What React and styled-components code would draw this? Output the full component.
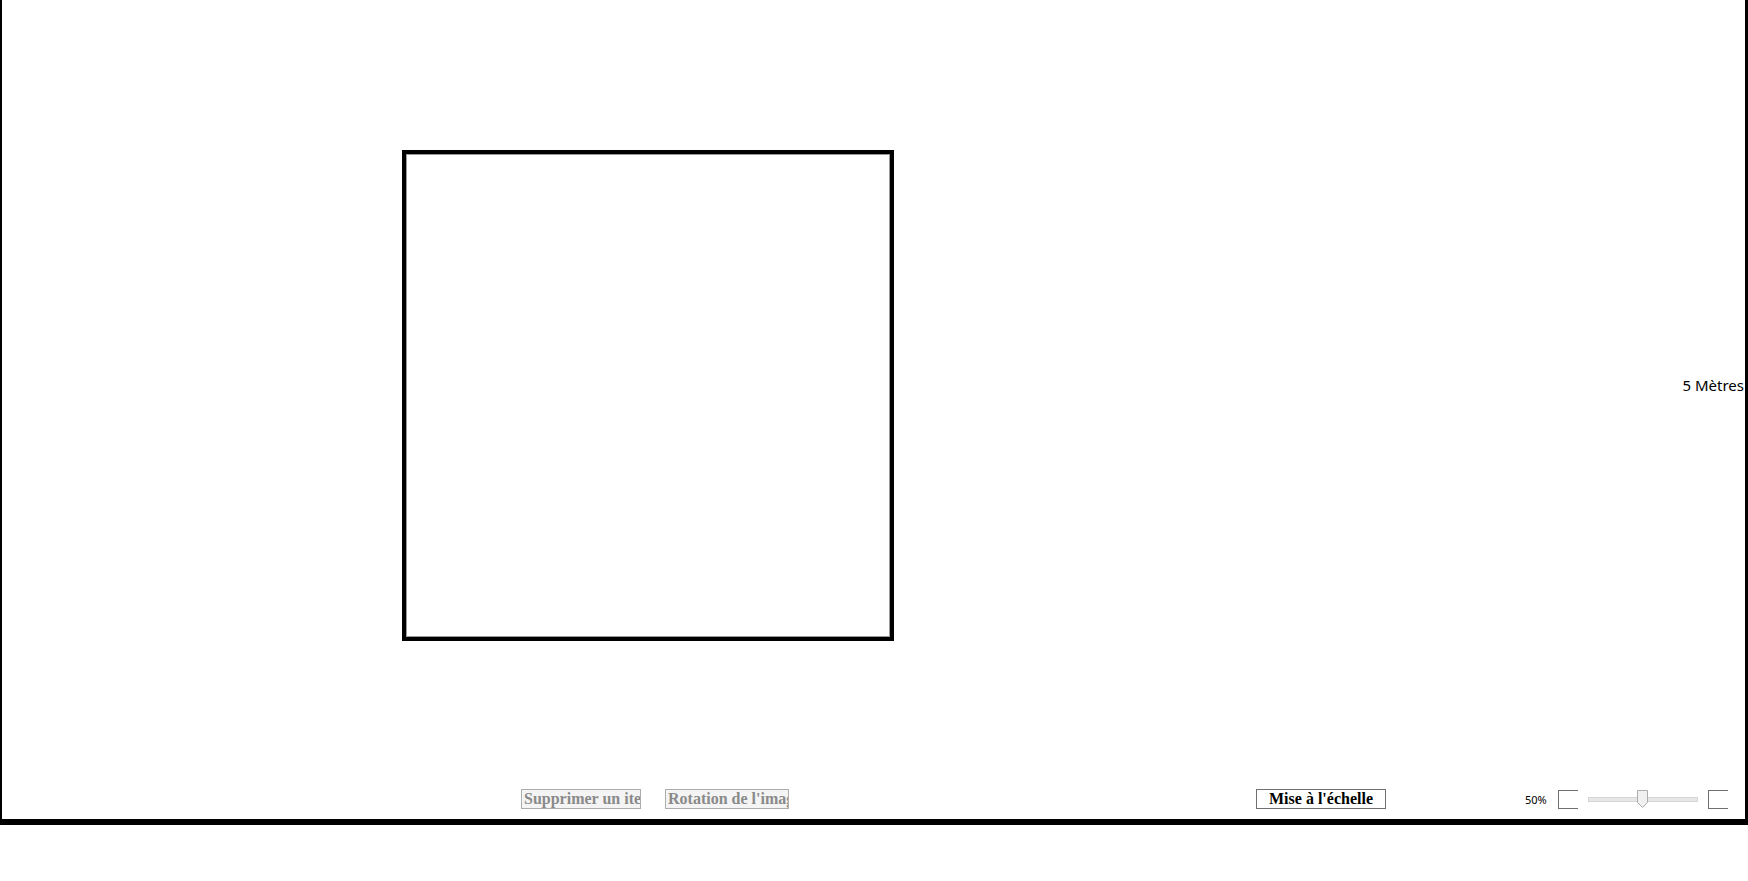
import React, { useState } from 'react';
import styled, { createGlobalStyle } from 'styled-components';

const GlobalStyle = createGlobalStyle`
html, body {
  margin: 0;
  padding: 0;
  background: #ffffff;
}
body {
  font-family: "Noto Sans", "Liberation Sans", sans-serif;
}
`;

const Frame = styled.div`
display: flex;
flex-direction: column;
box-sizing: content-box;
width: 1743px;
height: 819px;
border-left: 2px solid #000;
border-right: 3px solid #000;
border-bottom: 6px solid #000;
background: #fff;
`;

const Canvas = styled.div`
position: relative;
flex: 1;
overflow: hidden;
`;

const Shape = styled.div`
position: absolute;
box-sizing: border-box;
border: 4px solid #000;
box-shadow: inset 0 0 0 1px #9a9a9a;
`;

const ScaleLabel = styled.span`
position: absolute;
right: 1px;
top: 375px;
font-family: "Noto Sans", "Open Sans", sans-serif;
font-size: 15px;
color: #000;
white-space: nowrap;
`;

const Toolbar = styled.div`
display: flex;
align-items: center;
height: 20px;
padding: 0 0 10px 519px;
`;

const ToolButton = styled.button`
box-sizing: border-box;
width: ${p => p.width}px;
height: 20px;
margin-left: ${p => p.offset || 0}px;
padding: 0 ${p => (p.center ? 0 : 2)}px;
font-family: "Liberation Serif", "DejaVu Serif", serif;
font-weight: bold;
font-size: 16px;
line-height: 18px;
text-align: ${p => (p.center ? 'center' : 'left')};
white-space: nowrap;
overflow: hidden;
color: ${p => (p.disabled ? '#8a8a8a' : '#000')};
background: ${p => (p.disabled ? '#f4f4f4' : '#fff')};
border: 1px solid ${p => (p.disabled ? '#adadad' : '#707070')};
border-radius: 0;
cursor: default;
`;

const ZoomLabel = styled.span`
margin-left: 139px;
font-family: "Noto Sans", "Open Sans", sans-serif;
font-size: 11px;
color: #000;
`;

const ZoomBox = styled.div`
box-sizing: border-box;
width: 20px;
height: 19px;
margin-left: ${p => p.offset}px;
border: 1px solid #707070;
border-right: none;
`;

const Slider = styled.div`
position: relative;
width: 110px;
height: 19px;
margin-left: 10px;
display: flex;
align-items: center;
`;

const Track = styled.div`
width: 100%;
height: 3px;
background: #e7e7e7;
border: 1px solid #d6d6d6;
box-sizing: content-box;
`;

const Thumb = styled.svg`
position: absolute;
top: 0;
`;

export default function App() {
  const [zoom] = useState(50);

  return (
    <>
      <GlobalStyle />
      <Frame>
        <Canvas>
          <Shape style={{ left: 400, top: 150, width: 492, height: 491 }} />
          <ScaleLabel>5 Mètres</ScaleLabel>
        </Canvas>
        <Toolbar>
          <ToolButton width={120} disabled>Supprimer un item</ToolButton>
          <ToolButton width={124} offset={24} disabled>Rotation de l'image</ToolButton>
          <ToolButton width={130} offset={467} center>Mise à l'échelle</ToolButton>
          <ZoomLabel>{zoom}%</ZoomLabel>
          <ZoomBox offset={11} />
          <Slider>
            <Track />
            <Thumb width="11" height="18" viewBox="0 0 11 18" style={{ left: 49 }}>
              <path d="M0.5 0.5 H10.5 V12.5 L5.5 17.5 L0.5 12.5 Z" fill="#f0f0f0" stroke="#acacac" />
            </Thumb>
          </Slider>
          <ZoomBox offset={10} />
        </Toolbar>
      </Frame>
    </>
  );
}
